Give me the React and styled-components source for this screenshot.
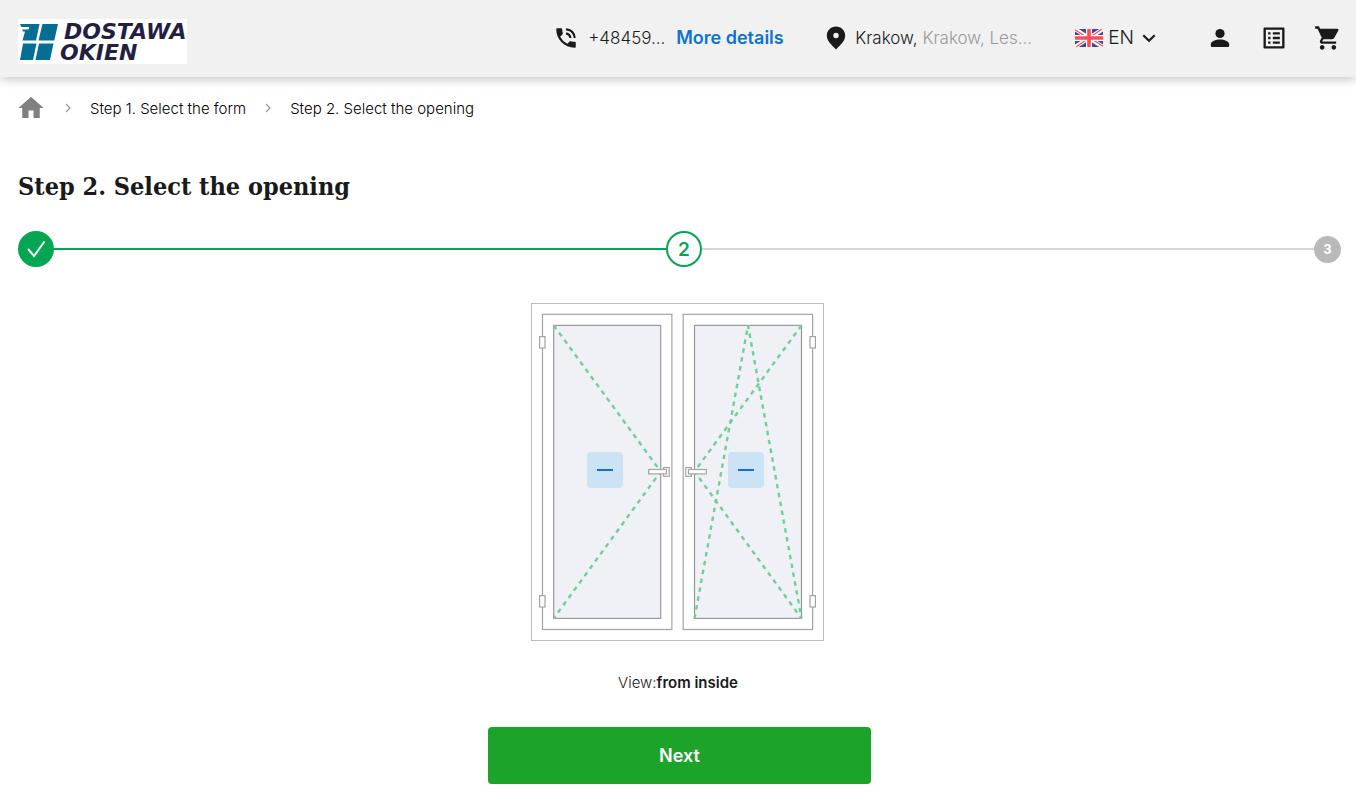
import React from 'react'
import styled, { createGlobalStyle } from 'styled-components'
import { MdHome, MdListAlt, MdPhoneInTalk, MdShoppingCart } from 'react-icons/md'

const GlobalStyle = createGlobalStyle`
* {
    box-sizing: border-box;
}
body {
    margin: 0;
    background: #fff;
    color: #1a1a1a;
    font-family: Inter, "Open Sans", sans-serif;
}
a {
    color: inherit;
    text-decoration: none;
}
button {
    border: 0;
    padding: 0;
    background: none;
    font: inherit;
    color: inherit;
    cursor: pointer;
}
svg {
    display: block;
    flex-shrink: 0;
}
`

const Header = styled.header`
display: flex;
align-items: center;
height: 77px;
padding: 0 14px 2px 18px;
background: #f1f1f1;
box-shadow: 0 2px 10px rgba(0, 0, 0, 0.25);
font-size: 17px;
font-weight: 300;
`

const LogoLink = styled.a`
margin: 7px auto 0 0;
background: #fff;
`

const HeaderGroup = styled.div`
display: flex;
align-items: center;
margin-right: ${(p) => p.$space}px;
`

const Phone = styled.a`
width: 78px;
margin: 0 10px 0 9px;
white-space: nowrap;
`

const More = styled.button`
width: 108px;
text-align: left;
white-space: nowrap;
font-size: 18px;
font-weight: 600;
color: #0b74d1;
`

const City = styled.button`
display: flex;
gap: 5px;
width: 176px;
margin-left: 8px;
font-weight: 300;
white-space: nowrap;
`

const Muted = styled.span`
color: #999;
`

const Language = styled.button`
display: flex;
align-items: center;
gap: 5px;
height: 28px;
font-size: 19px;
font-weight: 300;
`

const HeaderIcons = styled.nav`
display: flex;
align-items: center;
gap: 26px;
`

const IconLink = styled.a`
display: grid;
place-items: center;
width: 28px;
height: 28px;
`

const Breadcrumbs = styled.nav`
display: flex;
align-items: center;
gap: 15px;
height: 30px;
margin-top: 16px;
padding: 0 15px 0 16px;
font-size: 15px;
font-weight: 300;
color: #000;
`

const Title = styled.h1`
margin: 44px 15px 24px 18px;
font-family: "DejaVu Serif Condensed", "DejaVu Serif", serif;
font-size: 25px;
line-height: 40px;
font-weight: 600;
`

const Steps = styled.ol`
display: flex;
align-items: center;
margin: 0;
padding: 0 15px 0 18px;
list-style: none;
`

const Step = styled.li`
display: grid;
place-items: center;
flex-shrink: 0;
width: 36px;
height: 36px;
border: 2px solid #04a651;
border-radius: 50%;
background: ${(p) => (p.$done ? '#04a651' : '#fff')};
color: #04a651;
font-size: 19px;
font-weight: 600;
`

const NextStep = styled(Step)`
width: 27px;
height: 27px;
border: 0;
background: #b9b9b9;
color: #fff;
font-size: 13px;
font-weight: 700;
`

const Line = styled.li`
flex: 1;
height: 2px;
background: ${(p) => (p.$done ? '#04a651' : '#d6d6d6')};
`

const Preview = styled.figure`
display: flex;
flex-direction: column;
align-items: center;
gap: 31px;
margin: 36px 0 0;
`

const Drawing = styled.div`
position: relative;
`

const LeafButton = styled.button`
position: absolute;
top: 149px;
left: ${(p) => p.$left}px;
display: grid;
place-items: center;
width: 36px;
height: 36px;
border-radius: 4px;
background: #cce2f5;
`

const Caption = styled.figcaption`
font-size: 15px;
line-height: 20px;
font-weight: 300;

strong {
    font-weight: 600;
}
`

const Actions = styled.div`
display: flex;
justify-content: center;
padding: 34px 15px 22px 18px;
`

const NextButton = styled.button`
width: 100%;
max-width: 383px;
height: 57px;
border-radius: 4px;
background: #1ca32a;
color: #fff;
font-size: 18px;
font-weight: 600;
`

function Logo() {
  return (
    <svg width="169" height="45" viewBox="0 0 169 45" role="img" aria-label="Dostawa Okien">
      <g fill="#066d94">
        <path d="M2 5h19.500l-3.500 16.500H4.500L7 12.500H5l-.8-2h6.300l.8-2.500H3.500z" />
        <path d="M24.500 5H40l-3.700 16.500H20.500z" />
        <path d="M5 24.500h13.500L15 41H2z" />
        <path d="M21 24.500h14.500L32 41H17.500z" />
      </g>
      <g fill="#231f42" fontFamily="DejaVu Sans" fontWeight="700" fontStyle="italic" fontSize="22">
        <text x="46" y="20">DOSTAWA</text>
        <text x="42" y="41">OKIEN</text>
      </g>
    </svg>
  )
}

function Pin() {
  return (
    <svg width="22" height="24" viewBox="0 0 22 24">
      <path fill="#1a1a1a" fillRule="evenodd" d="M11 .5c-5.200 0-9.200 4-9.200 9 0 5.500 5 9.500 9.200 14 4.200-4.500 9.200-8.500 9.200-14 0-5-4-9-9.200-9zm0 6.300a2.700 2.700 0 1 1 0 5.400 2.700 2.700 0 0 1 0-5.400z" />
    </svg>
  )
}

function Flag() {
  return (
    <svg width="28" height="18" viewBox="0 0 28 18">
      <path fill="#41479b" d="M0 0h28v18H0z" />
      <path stroke="#fff" strokeWidth="4" d="M0 0l28 18M28 0L0 18" />
      <path stroke="#ff4b55" strokeWidth="1.200" d="M0 .8L12 8.500M28 17.200L16 9.500M27 0L16 7.500M1 18l11-7.500" />
      <path stroke="#fff" strokeWidth="6" d="M14 0v18M0 9h28" />
      <path stroke="#ff4b55" strokeWidth="3.600" d="M14 0v18M0 9h28" />
    </svg>
  )
}

function Chevron({ size, color, width, d }) {
  return (
    <svg width={size} height={size} viewBox="0 0 14 14" fill="none" stroke={color} strokeWidth={width}>
      <path d={d} />
    </svg>
  )
}

function Person() {
  return (
    <svg width="28" height="28" viewBox="0 0 28 28" fill="#1a1a1a">
      <circle cx="14" cy="9.500" r="4.600" />
      <path d="M4.800 20.500c0-3.300 5-5 9.200-5s9.200 1.700 9.200 5v1.200a1.300 1.300 0 0 1-1.300 1.300H6.100a1.300 1.300 0 0 1-1.300-1.300z" />
    </svg>
  )
}

function WindowDrawing() {
  return (
    <svg width="294" height="339" viewBox="0 0 294 339" fill="none">
      <rect x="0.500" y="0.500" width="292" height="337" stroke="#bdbdbd" />
      <g stroke="#a3a3a3" strokeWidth="1.200">
        <rect x="11.500" y="11.300" width="129.400" height="315.200" />
        <rect x="152.200" y="11.300" width="129.400" height="315.200" />
      </g>
      <g fill="#f0f1f7" stroke="#999" strokeWidth="1.200">
        <rect x="22.700" y="22.400" width="107" height="293" />
        <rect x="163.500" y="22.400" width="107" height="293" />
      </g>
      <g stroke="#6fcf97" strokeWidth="2.400" strokeDasharray="4.500 4.500">
        <path d="M22.700 22.400L129.700 168.500L22.700 315.400" />
        <path d="M270.500 22.400L163.500 168.500L270.500 315.400" />
        <path d="M163.500 315.400L217 22.400L270.500 315.400" />
      </g>
      <g fill="#fff" stroke="#a3a3a3" strokeWidth="1.200">
        <rect x="8.600" y="33.600" width="5.400" height="11.400" />
        <rect x="8.600" y="292.600" width="5.400" height="11.400" />
        <rect x="279" y="33.600" width="5.400" height="11.400" />
        <rect x="279" y="292.600" width="5.400" height="11.400" />
        <rect x="132.600" y="164.500" width="5.600" height="8.800" />
        <rect x="117.700" y="166.500" width="17.800" height="4.400" />
        <rect x="154.800" y="164.500" width="5.600" height="8.800" />
        <rect x="157.500" y="166.500" width="17.800" height="4.400" />
      </g>
    </svg>
  )
}

function Minus() {
  return (
    <svg width="16" height="2" viewBox="0 0 16 2">
      <path fill="#0b74d1" d="M0 0h16v2H0z" />
    </svg>
  )
}

function App() {
  return (
    <>
      <GlobalStyle />
      <Header>
        <LogoLink href="#">
          <Logo />
        </LogoLink>
        <HeaderGroup $space={41}>
          <MdPhoneInTalk size={26} />
          <Phone href="tel:+48459">+48459...</Phone>
          <More type="button">More details</More>
        </HeaderGroup>
        <HeaderGroup $space={44}>
          <Pin />
          <City type="button">
            <span>Krakow,</span>
            <Muted>Krakow, Les...</Muted>
          </City>
        </HeaderGroup>
        <HeaderGroup $space={47}>
          <Language type="button">
            <Flag />
            <span>EN</span>
            <Chevron size={20} color="#1a1a1a" width={1.5} d="M3 5l4 4 4-4" />
          </Language>
        </HeaderGroup>
        <HeaderIcons>
          <IconLink href="#" aria-label="Account"><Person /></IconLink>
          <IconLink href="#" aria-label="Orders"><MdListAlt size={28} /></IconLink>
          <IconLink href="#" aria-label="Cart"><MdShoppingCart size={28} /></IconLink>
        </HeaderIcons>
      </Header>
      <main>
        <Breadcrumbs aria-label="Breadcrumb">
          <a href="#" aria-label="Home"><MdHome size={30} color="#808080" /></a>
          <Chevron size={14} color="#999" width={1.3} d="M5 3l4 4-4 4" />
          <a href="#">Step 1. Select the form</a>
          <Chevron size={14} color="#999" width={1.3} d="M5 3l4 4-4 4" />
          <a href="#" aria-current="page">Step 2. Select the opening</a>
        </Breadcrumbs>
        <Title>Step 2. Select the opening</Title>
        <Steps>
          <Step $done>
            <svg width="20" height="20" viewBox="0 0 20 20" fill="none" stroke="#fff" strokeWidth="2">
              <path d="M2 10l6 7L18.500 2.500" />
            </svg>
          </Step>
          <Line $done aria-hidden="true" />
          <Step aria-current="step">2</Step>
          <Line aria-hidden="true" />
          <NextStep>3</NextStep>
        </Steps>
        <Preview>
          <Drawing>
            <WindowDrawing />
            <LeafButton type="button" $left={56} aria-label="Left leaf opening"><Minus /></LeafButton>
            <LeafButton type="button" $left={197} aria-label="Right leaf opening"><Minus /></LeafButton>
          </Drawing>
          <Caption>View:<strong>from inside</strong></Caption>
        </Preview>
        <Actions>
          <NextButton type="button">Next</NextButton>
        </Actions>
      </main>
    </>
  )
}

export default App
